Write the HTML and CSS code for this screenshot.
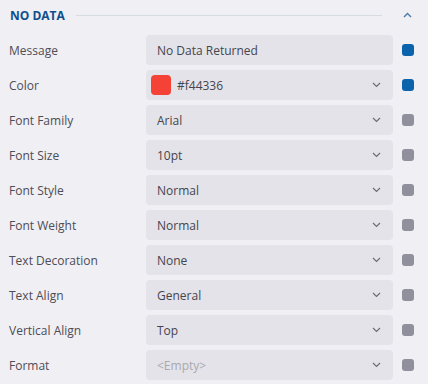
FILE: index.html
```html
<!DOCTYPE html>
<html>
<head>
<meta charset="utf-8">
<link rel="stylesheet" href="styles.css">
</head>
<body>
<div class="panel">
  <div class="header">
    <span class="title">NO DATA</span>
    <span class="rule"></span>
    <svg class="collapse" width="9" height="6" viewBox="0 0 9 6"><path d="M1 5 L4.5 1.5 L8 5" fill="none" stroke="#4a7aa8" stroke-width="1.4"/></svg>
  </div>
  <div class="rows">
    <div class="row">
      <span class="label">Message</span>
      <div class="field"><span class="value">No Data Returned</span></div>
      <span class="dot on"></span>
    </div>
    <div class="row">
      <span class="label">Color</span>
      <div class="field select"><span class="swatch"></span><span class="value">#f44336</span><svg class="chev" width="9" height="6" viewBox="0 0 9 6"><path d="M1 1 L4.5 4.5 L8 1" fill="none" stroke="#6d6d75" stroke-width="1.2"/></svg></div>
      <span class="dot on"></span>
    </div>
    <div class="row">
      <span class="label">Font Family</span>
      <div class="field select"><span class="value">Arial</span><svg class="chev" width="9" height="6" viewBox="0 0 9 6"><path d="M1 1 L4.5 4.5 L8 1" fill="none" stroke="#6d6d75" stroke-width="1.2"/></svg></div>
      <span class="dot"></span>
    </div>
    <div class="row">
      <span class="label">Font Size</span>
      <div class="field select"><span class="value">10pt</span><svg class="chev" width="9" height="6" viewBox="0 0 9 6"><path d="M1 1 L4.5 4.5 L8 1" fill="none" stroke="#6d6d75" stroke-width="1.2"/></svg></div>
      <span class="dot"></span>
    </div>
    <div class="row">
      <span class="label">Font Style</span>
      <div class="field select"><span class="value">Normal</span><svg class="chev" width="9" height="6" viewBox="0 0 9 6"><path d="M1 1 L4.5 4.5 L8 1" fill="none" stroke="#6d6d75" stroke-width="1.2"/></svg></div>
      <span class="dot"></span>
    </div>
    <div class="row">
      <span class="label">Font Weight</span>
      <div class="field select"><span class="value">Normal</span><svg class="chev" width="9" height="6" viewBox="0 0 9 6"><path d="M1 1 L4.5 4.5 L8 1" fill="none" stroke="#6d6d75" stroke-width="1.2"/></svg></div>
      <span class="dot"></span>
    </div>
    <div class="row">
      <span class="label">Text Decoration</span>
      <div class="field select"><span class="value">None</span><svg class="chev" width="9" height="6" viewBox="0 0 9 6"><path d="M1 1 L4.5 4.5 L8 1" fill="none" stroke="#6d6d75" stroke-width="1.2"/></svg></div>
      <span class="dot"></span>
    </div>
    <div class="row">
      <span class="label">Text Align</span>
      <div class="field select"><span class="value">General</span><svg class="chev" width="9" height="6" viewBox="0 0 9 6"><path d="M1 1 L4.5 4.5 L8 1" fill="none" stroke="#6d6d75" stroke-width="1.2"/></svg></div>
      <span class="dot"></span>
    </div>
    <div class="row">
      <span class="label">Vertical Align</span>
      <div class="field select"><span class="value">Top</span><svg class="chev" width="9" height="6" viewBox="0 0 9 6"><path d="M1 1 L4.5 4.5 L8 1" fill="none" stroke="#6d6d75" stroke-width="1.2"/></svg></div>
      <span class="dot"></span>
    </div>
    <div class="row">
      <span class="label">Format</span>
      <div class="field select"><span class="value placeholder">&lt;Empty&gt;</span><svg class="chev" width="9" height="6" viewBox="0 0 9 6"><path d="M1 1 L4.5 4.5 L8 1" fill="none" stroke="#6d6d75" stroke-width="1.2"/></svg></div>
      <span class="dot"></span>
    </div>
  </div>
</div>
</body>
</html>
```
FILE: styles.css
```css
html, body {
  margin: 0;
  padding: 0;
  background: #f0eff4;
}
body {
  font-family: "Open Sans", "Noto Sans", sans-serif;
  font-size: 12px;
  color: #4a4a52;
}
.panel {
  width: 428px;
  height: 384px;
  overflow: hidden;
}
.header {
  height: 30px;
  display: flex;
  align-items: center;
  padding: 0 16px 0 10px;
}
.title {
  font-weight: 700;
  font-size: 12px;
  color: #0f4e8c;
  letter-spacing: 0;
}
.rule {
  flex: 1;
  height: 1px;
  background: #d6dbe1;
  margin: 0 21px 0 11px;
}
.collapse {
  display: block;
}
.rows {
  margin-top: 5px;
  display: flex;
  flex-direction: column;
  gap: 5px;
}
.row {
  display: grid;
  grid-template-columns: 137px 247px 12px;
  column-gap: 0;
  align-items: center;
  padding-left: 9px;
  height: 30px;
}
.dot {
  margin-left: 9px;
}
.label {
  color: #4d4d55;
}
.field {
  height: 30px;
  box-sizing: border-box;
  background: #e4e3e9;
  border-radius: 4px;
  display: flex;
  align-items: center;
  padding: 0 12px 0 11px;
  color: #45454d;
}
.field .value {
  flex: 1;
}
.placeholder {
  color: #a9a9b0;
}
.swatch {
  width: 20px;
  height: 20px;
  border-radius: 4px;
  background: #f44336;
  margin: 0 6px 0 -6px;
  flex: none;
}
.chev {
  display: block;
  flex: none;
}
.dot {
  width: 12px;
  height: 12px;
  border-radius: 3px;
  background: #90909c;
}
.dot.on {
  background: #0b63ab;
}
```
